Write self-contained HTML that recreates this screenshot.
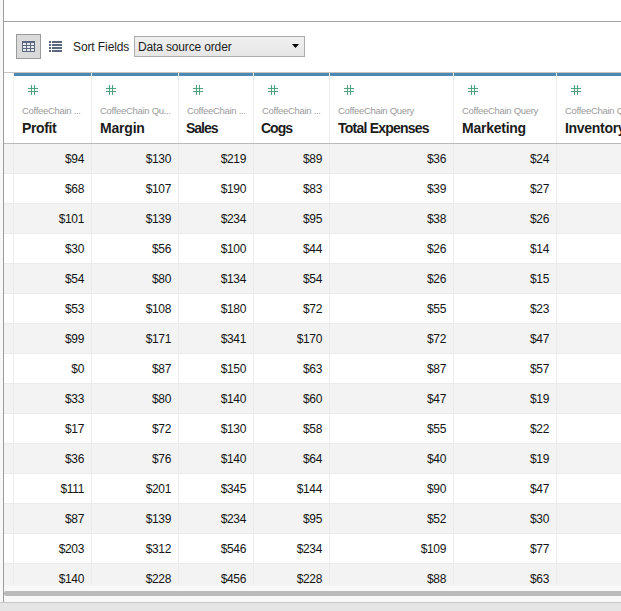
<!DOCTYPE html>
<html><head><meta charset="utf-8">
<style>
*{margin:0;padding:0;box-sizing:border-box}
html,body{width:621px;height:611px;overflow:hidden;background:#fff}
body{position:relative;font-family:"Liberation Sans",sans-serif;color:#1e1e1e}
.abs{position:absolute}
.t{position:absolute;white-space:nowrap;line-height:1}
.num{position:absolute;white-space:nowrap;line-height:1;font-size:12px;letter-spacing:-0.35px;text-align:right;color:#141414}
.sub{position:absolute;white-space:nowrap;line-height:1;font-size:9.5px;letter-spacing:-0.3px;color:#9a9a9a}
.nm{position:absolute;white-space:nowrap;line-height:1;font-size:14px;font-weight:bold;color:#1c1c1c}
</style></head><body>

<div class="abs" style="left:0;top:0;width:3px;height:602px;background:#f8f8f8"></div>
<div class="abs" style="left:3px;top:0;width:1px;height:602px;background:#9c9c9c"></div>
<div class="abs" style="left:4px;top:21px;width:617px;height:1px;background:#a4a4a4"></div>
<div class="abs" style="left:16px;top:34px;width:25px;height:25px;border:1px solid #9a9a9a;background:#dadada"></div>
<svg class="abs" style="left:22px;top:41px" width="13" height="11" viewBox="0 0 13 11"><rect width="13" height="11" fill="#5a697f"/><rect x="1" y="2" width="3" height="2" fill="#e6e8ec"/><rect x="5" y="2" width="3" height="2" fill="#e6e8ec"/><rect x="9" y="2" width="3" height="2" fill="#e6e8ec"/><rect x="1" y="5" width="3" height="2" fill="#e6e8ec"/><rect x="5" y="5" width="3" height="2" fill="#e6e8ec"/><rect x="9" y="5" width="3" height="2" fill="#e6e8ec"/><rect x="1" y="8" width="3" height="2" fill="#e6e8ec"/><rect x="5" y="8" width="3" height="2" fill="#e6e8ec"/><rect x="9" y="8" width="3" height="2" fill="#e6e8ec"/></svg>
<svg class="abs" style="left:49px;top:41px" width="13" height="11" viewBox="0 0 13 11"><rect x="0" y="0" width="2" height="2" fill="#5a697f"/><rect x="3" y="0" width="10" height="2" fill="#5a697f"/><rect x="0" y="3" width="2" height="2" fill="#5a697f"/><rect x="3" y="3" width="10" height="2" fill="#5a697f"/><rect x="0" y="6" width="2" height="2" fill="#5a697f"/><rect x="3" y="6" width="10" height="2" fill="#5a697f"/><rect x="0" y="9" width="2" height="2" fill="#5a697f"/><rect x="3" y="9" width="10" height="2" fill="#5a697f"/></svg>
<div class="t" style="left:73px;top:41px;font-size:12px;letter-spacing:-0.1px">Sort Fields</div>
<div class="abs" style="left:134px;top:36px;width:171px;height:21px;border:1px solid #acacac;background:linear-gradient(#f0f0f0,#e6e6e6)"></div>
<div class="t" style="left:138px;top:41px;font-size:12px;letter-spacing:-0.15px">Data source order</div>
<svg class="abs" style="left:292px;top:44px" width="7" height="4" viewBox="0 0 7 4"><path d="M0 0H7L3.5 4Z" fill="#000"/></svg>
<div class="abs" style="left:4px;top:72px;width:617px;height:1px;background:#c9c4c2"></div>
<div class="abs" style="left:13px;top:73px;width:1px;height:70px;background:#f4f4f4"></div>
<div class="abs" style="left:14px;top:73px;width:77px;height:3px;background:#4d87b3"></div>
<div class="abs" style="left:91px;top:73px;width:1px;height:70px;background:#ededed"></div>
<svg class="abs" style="left:28px;top:85px" width="10" height="10" viewBox="0 0 10 10"><path d="M3.5 0V10M6.5 0V10M0 3.5H10M0 6.5H10" stroke="#50a37e" stroke-width="1" fill="none"/></svg>
<div class="sub" style="left:22px;top:106px">CoffeeChain ...</div>
<div class="nm" style="left:22px;top:121px;letter-spacing:-0.4px">Profit</div>
<div class="abs" style="left:92px;top:73px;width:86px;height:3px;background:#4d87b3"></div>
<div class="abs" style="left:178px;top:73px;width:1px;height:70px;background:#ededed"></div>
<svg class="abs" style="left:106px;top:85px" width="10" height="10" viewBox="0 0 10 10"><path d="M3.5 0V10M6.5 0V10M0 3.5H10M0 6.5H10" stroke="#50a37e" stroke-width="1" fill="none"/></svg>
<div class="sub" style="left:100px;top:106px">CoffeeChain Qu...</div>
<div class="nm" style="left:100px;top:121px;letter-spacing:-0.2px">Margin</div>
<div class="abs" style="left:179px;top:73px;width:74px;height:3px;background:#4d87b3"></div>
<div class="abs" style="left:253px;top:73px;width:1px;height:70px;background:#ededed"></div>
<svg class="abs" style="left:193px;top:85px" width="10" height="10" viewBox="0 0 10 10"><path d="M3.5 0V10M6.5 0V10M0 3.5H10M0 6.5H10" stroke="#50a37e" stroke-width="1" fill="none"/></svg>
<div class="sub" style="left:187px;top:106px">CoffeeChain ...</div>
<div class="nm" style="left:186px;top:121px;letter-spacing:-1.0px">Sales</div>
<div class="abs" style="left:254px;top:73px;width:75px;height:3px;background:#4d87b3"></div>
<div class="abs" style="left:329px;top:73px;width:1px;height:70px;background:#ededed"></div>
<svg class="abs" style="left:268px;top:85px" width="10" height="10" viewBox="0 0 10 10"><path d="M3.5 0V10M6.5 0V10M0 3.5H10M0 6.5H10" stroke="#50a37e" stroke-width="1" fill="none"/></svg>
<div class="sub" style="left:262px;top:106px">CoffeeChain ...</div>
<div class="nm" style="left:261px;top:121px;letter-spacing:-1.0px">Cogs</div>
<div class="abs" style="left:330px;top:73px;width:123px;height:3px;background:#4d87b3"></div>
<div class="abs" style="left:453px;top:73px;width:1px;height:70px;background:#ededed"></div>
<svg class="abs" style="left:344px;top:85px" width="10" height="10" viewBox="0 0 10 10"><path d="M3.5 0V10M6.5 0V10M0 3.5H10M0 6.5H10" stroke="#50a37e" stroke-width="1" fill="none"/></svg>
<div class="sub" style="left:338px;top:106px">CoffeeChain Query</div>
<div class="nm" style="left:338px;top:121px;letter-spacing:-0.77px">Total Expenses</div>
<div class="abs" style="left:454px;top:73px;width:102px;height:3px;background:#4d87b3"></div>
<div class="abs" style="left:556px;top:73px;width:1px;height:70px;background:#ededed"></div>
<svg class="abs" style="left:468px;top:85px" width="10" height="10" viewBox="0 0 10 10"><path d="M3.5 0V10M6.5 0V10M0 3.5H10M0 6.5H10" stroke="#50a37e" stroke-width="1" fill="none"/></svg>
<div class="sub" style="left:462px;top:106px">CoffeeChain Query</div>
<div class="nm" style="left:462px;top:121px;letter-spacing:-0.25px">Marketing</div>
<div class="abs" style="left:557px;top:73px;width:143px;height:3px;background:#4d87b3"></div>
<svg class="abs" style="left:571px;top:85px" width="10" height="10" viewBox="0 0 10 10"><path d="M3.5 0V10M6.5 0V10M0 3.5H10M0 6.5H10" stroke="#50a37e" stroke-width="1" fill="none"/></svg>
<div class="sub" style="left:565px;top:106px">CoffeeChain Query</div>
<div class="nm" style="left:565px;top:121px;letter-spacing:-0.3px">Inventory</div>
<div class="abs" style="left:4px;top:143px;width:617px;height:1px;background:#bababa"></div>
<div class="abs" style="left:4px;top:144px;width:617px;height:441px;overflow:hidden">
<div class="abs" style="left:0;top:0px;width:617px;height:29px;background:#f3f3f3"></div>
<div class="abs" style="left:0;top:29px;width:617px;height:1px;background:#ececec"></div>
<div class="num" style="right:537px;top:9px">$94</div>
<div class="num" style="right:450px;top:9px">$130</div>
<div class="num" style="right:375px;top:9px">$219</div>
<div class="num" style="right:299px;top:9px">$89</div>
<div class="num" style="right:175px;top:9px">$36</div>
<div class="num" style="right:72px;top:9px">$24</div>
<div class="abs" style="left:0;top:30px;width:617px;height:29px;background:#ffffff"></div>
<div class="abs" style="left:0;top:59px;width:617px;height:1px;background:#ececec"></div>
<div class="num" style="right:537px;top:39px">$68</div>
<div class="num" style="right:450px;top:39px">$107</div>
<div class="num" style="right:375px;top:39px">$190</div>
<div class="num" style="right:299px;top:39px">$83</div>
<div class="num" style="right:175px;top:39px">$39</div>
<div class="num" style="right:72px;top:39px">$27</div>
<div class="abs" style="left:0;top:60px;width:617px;height:29px;background:#f3f3f3"></div>
<div class="abs" style="left:0;top:89px;width:617px;height:1px;background:#ececec"></div>
<div class="num" style="right:537px;top:69px">$101</div>
<div class="num" style="right:450px;top:69px">$139</div>
<div class="num" style="right:375px;top:69px">$234</div>
<div class="num" style="right:299px;top:69px">$95</div>
<div class="num" style="right:175px;top:69px">$38</div>
<div class="num" style="right:72px;top:69px">$26</div>
<div class="abs" style="left:0;top:90px;width:617px;height:29px;background:#ffffff"></div>
<div class="abs" style="left:0;top:119px;width:617px;height:1px;background:#ececec"></div>
<div class="num" style="right:537px;top:99px">$30</div>
<div class="num" style="right:450px;top:99px">$56</div>
<div class="num" style="right:375px;top:99px">$100</div>
<div class="num" style="right:299px;top:99px">$44</div>
<div class="num" style="right:175px;top:99px">$26</div>
<div class="num" style="right:72px;top:99px">$14</div>
<div class="abs" style="left:0;top:120px;width:617px;height:29px;background:#f3f3f3"></div>
<div class="abs" style="left:0;top:149px;width:617px;height:1px;background:#ececec"></div>
<div class="num" style="right:537px;top:129px">$54</div>
<div class="num" style="right:450px;top:129px">$80</div>
<div class="num" style="right:375px;top:129px">$134</div>
<div class="num" style="right:299px;top:129px">$54</div>
<div class="num" style="right:175px;top:129px">$26</div>
<div class="num" style="right:72px;top:129px">$15</div>
<div class="abs" style="left:0;top:150px;width:617px;height:29px;background:#ffffff"></div>
<div class="abs" style="left:0;top:179px;width:617px;height:1px;background:#ececec"></div>
<div class="num" style="right:537px;top:159px">$53</div>
<div class="num" style="right:450px;top:159px">$108</div>
<div class="num" style="right:375px;top:159px">$180</div>
<div class="num" style="right:299px;top:159px">$72</div>
<div class="num" style="right:175px;top:159px">$55</div>
<div class="num" style="right:72px;top:159px">$23</div>
<div class="abs" style="left:0;top:180px;width:617px;height:29px;background:#f3f3f3"></div>
<div class="abs" style="left:0;top:209px;width:617px;height:1px;background:#ececec"></div>
<div class="num" style="right:537px;top:189px">$99</div>
<div class="num" style="right:450px;top:189px">$171</div>
<div class="num" style="right:375px;top:189px">$341</div>
<div class="num" style="right:299px;top:189px">$170</div>
<div class="num" style="right:175px;top:189px">$72</div>
<div class="num" style="right:72px;top:189px">$47</div>
<div class="abs" style="left:0;top:210px;width:617px;height:29px;background:#ffffff"></div>
<div class="abs" style="left:0;top:239px;width:617px;height:1px;background:#ececec"></div>
<div class="num" style="right:537px;top:219px">$0</div>
<div class="num" style="right:450px;top:219px">$87</div>
<div class="num" style="right:375px;top:219px">$150</div>
<div class="num" style="right:299px;top:219px">$63</div>
<div class="num" style="right:175px;top:219px">$87</div>
<div class="num" style="right:72px;top:219px">$57</div>
<div class="abs" style="left:0;top:240px;width:617px;height:29px;background:#f3f3f3"></div>
<div class="abs" style="left:0;top:269px;width:617px;height:1px;background:#ececec"></div>
<div class="num" style="right:537px;top:249px">$33</div>
<div class="num" style="right:450px;top:249px">$80</div>
<div class="num" style="right:375px;top:249px">$140</div>
<div class="num" style="right:299px;top:249px">$60</div>
<div class="num" style="right:175px;top:249px">$47</div>
<div class="num" style="right:72px;top:249px">$19</div>
<div class="abs" style="left:0;top:270px;width:617px;height:29px;background:#ffffff"></div>
<div class="abs" style="left:0;top:299px;width:617px;height:1px;background:#ececec"></div>
<div class="num" style="right:537px;top:279px">$17</div>
<div class="num" style="right:450px;top:279px">$72</div>
<div class="num" style="right:375px;top:279px">$130</div>
<div class="num" style="right:299px;top:279px">$58</div>
<div class="num" style="right:175px;top:279px">$55</div>
<div class="num" style="right:72px;top:279px">$22</div>
<div class="abs" style="left:0;top:300px;width:617px;height:29px;background:#f3f3f3"></div>
<div class="abs" style="left:0;top:329px;width:617px;height:1px;background:#ececec"></div>
<div class="num" style="right:537px;top:309px">$36</div>
<div class="num" style="right:450px;top:309px">$76</div>
<div class="num" style="right:375px;top:309px">$140</div>
<div class="num" style="right:299px;top:309px">$64</div>
<div class="num" style="right:175px;top:309px">$40</div>
<div class="num" style="right:72px;top:309px">$19</div>
<div class="abs" style="left:0;top:330px;width:617px;height:29px;background:#ffffff"></div>
<div class="abs" style="left:0;top:359px;width:617px;height:1px;background:#ececec"></div>
<div class="num" style="right:537px;top:339px">$111</div>
<div class="num" style="right:450px;top:339px">$201</div>
<div class="num" style="right:375px;top:339px">$345</div>
<div class="num" style="right:299px;top:339px">$144</div>
<div class="num" style="right:175px;top:339px">$90</div>
<div class="num" style="right:72px;top:339px">$47</div>
<div class="abs" style="left:0;top:360px;width:617px;height:29px;background:#f3f3f3"></div>
<div class="abs" style="left:0;top:389px;width:617px;height:1px;background:#ececec"></div>
<div class="num" style="right:537px;top:369px">$87</div>
<div class="num" style="right:450px;top:369px">$139</div>
<div class="num" style="right:375px;top:369px">$234</div>
<div class="num" style="right:299px;top:369px">$95</div>
<div class="num" style="right:175px;top:369px">$52</div>
<div class="num" style="right:72px;top:369px">$30</div>
<div class="abs" style="left:0;top:390px;width:617px;height:29px;background:#ffffff"></div>
<div class="abs" style="left:0;top:419px;width:617px;height:1px;background:#ececec"></div>
<div class="num" style="right:537px;top:399px">$203</div>
<div class="num" style="right:450px;top:399px">$312</div>
<div class="num" style="right:375px;top:399px">$546</div>
<div class="num" style="right:299px;top:399px">$234</div>
<div class="num" style="right:175px;top:399px">$109</div>
<div class="num" style="right:72px;top:399px">$77</div>
<div class="abs" style="left:0;top:420px;width:617px;height:29px;background:#f3f3f3"></div>
<div class="abs" style="left:0;top:449px;width:617px;height:1px;background:#ececec"></div>
<div class="num" style="right:537px;top:429px">$140</div>
<div class="num" style="right:450px;top:429px">$228</div>
<div class="num" style="right:375px;top:429px">$456</div>
<div class="num" style="right:299px;top:429px">$228</div>
<div class="num" style="right:175px;top:429px">$88</div>
<div class="num" style="right:72px;top:429px">$63</div>
<div class="abs" style="left:9px;top:0;width:1px;height:441px;background:#ececec"></div>
<div class="abs" style="left:87px;top:0;width:1px;height:441px;background:#ececec"></div>
<div class="abs" style="left:174px;top:0;width:1px;height:441px;background:#ececec"></div>
<div class="abs" style="left:249px;top:0;width:1px;height:441px;background:#ececec"></div>
<div class="abs" style="left:325px;top:0;width:1px;height:441px;background:#ececec"></div>
<div class="abs" style="left:449px;top:0;width:1px;height:441px;background:#ececec"></div>
<div class="abs" style="left:552px;top:0;width:1px;height:441px;background:#ececec"></div>
</div>
<div class="abs" style="left:4px;top:585px;width:617px;height:17px;background:#f8f8f8"></div>
<div class="abs" style="left:4px;top:591px;width:617px;height:5px;background:#bababa;border-radius:2px 0 0 2px"></div>
<div class="abs" style="left:0;top:602px;width:621px;height:1px;background:#c8c8c8"></div>
<div class="abs" style="left:0;top:603px;width:621px;height:8px;background:#e5e5e5"></div>
</body></html>
